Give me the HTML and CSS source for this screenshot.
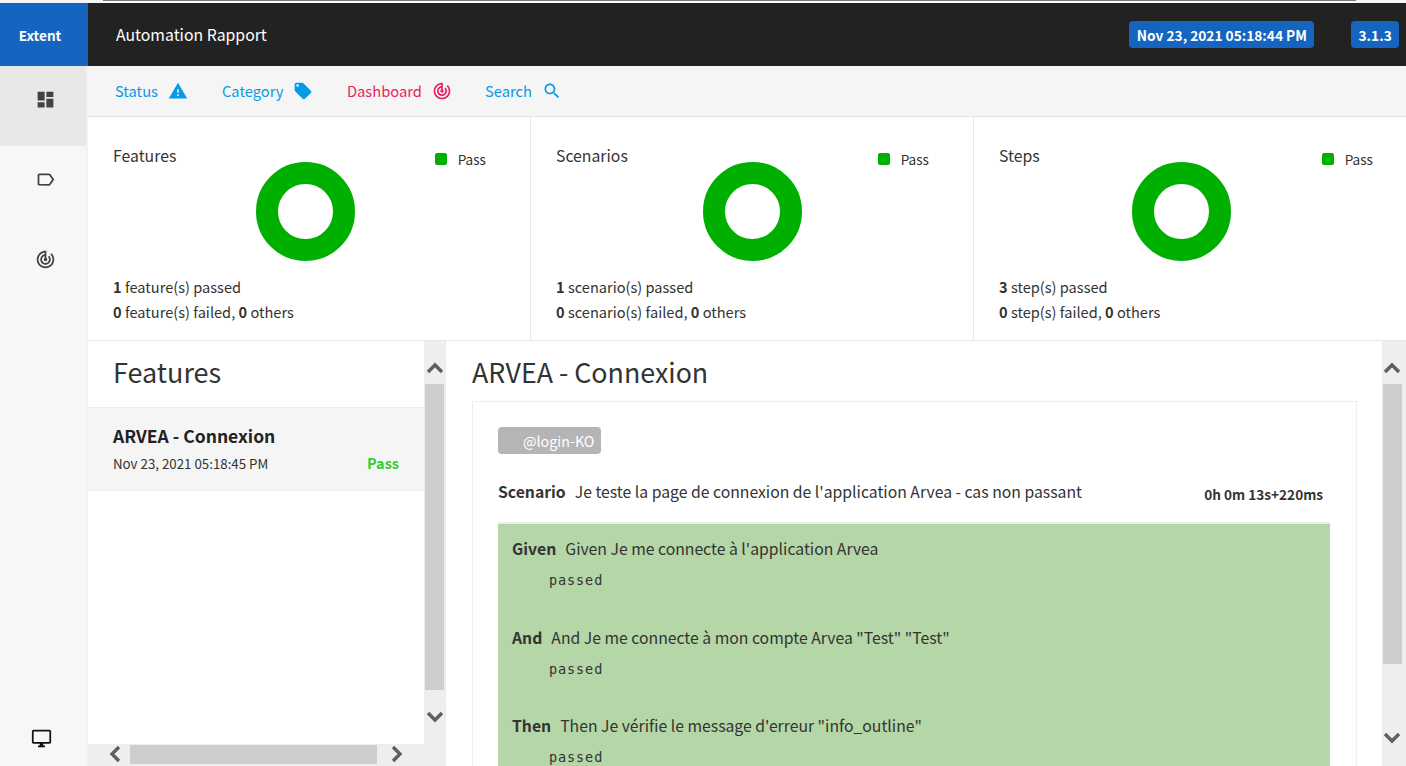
FILE: index.html
```html
<!DOCTYPE html>
<html lang="en">
<head>
    <meta charset="UTF-8">
    <title>Automation Rapport</title>
    <link rel="stylesheet" href="styles.css">
</head>
<body>
    <div class="topline"></div>
    <header class="header">
        <div class="logo">Extent</div>
        <div class="report-name">Automation Rapport</div>
        <span class="badge badge-date">Nov 23, 2021 05:18:44 PM</span>
        <span class="badge badge-version">3.1.3</span>
    </header>

    <div class="main">
        <nav class="sidebar">
            <a class="side-item active">
                <svg viewBox="0 0 24 24"><path d="M3 13h8V3H3v10zm0 8h8v-6H3v6zm10 0h8V11h-8v10zm0-18v6h8V3h-8z"/></svg>
            </a>
            <a class="side-item">
                <svg viewBox="0 0 24 24"><path d="M17.63 5.84C17.27 5.33 16.67 5 16 5L5 5.01C3.9 5.01 3 5.9 3 7v10c0 1.1.9 1.99 2 1.99L16 19c.67 0 1.27-.33 1.63-.84L22 12l-4.37-6.16zM16 17H5V7h11l3.55 5L16 17z"/></svg>
            </a>
            <a class="side-item">
                <svg viewBox="0 0 24 24"><path d="M19.07 4.93l-1.41 1.41C19.1 7.79 20 9.79 20 12c0 4.42-3.58 8-8 8s-8-3.58-8-8c0-4.08 3.05-7.44 7-7.93v2.02C8.16 6.57 6 9.03 6 12c0 3.31 2.69 6 6 6s6-2.69 6-6c0-1.66-.67-3.16-1.76-4.24l-1.41 1.41C15.55 9.9 16 10.9 16 12c0 2.21-1.79 4-4 4s-4-1.79-4-4c0-1.86 1.28-3.41 3-3.86v2.14c-.6.35-1 .98-1 1.72 0 1.1.9 2 2 2s2-.9 2-2c0-.74-.4-1.38-1-1.72V2h-1C6.48 2 2 6.48 2 12s4.48 10 10 10 10-4.48 10-10c0-2.76-1.12-5.26-2.93-7.07z"/></svg>
            </a>
            <a class="side-item side-bottom">
                <svg viewBox="0 0 24 24"><path d="M21 2H3c-1.1 0-2 .9-2 2v12c0 1.1.9 2 2 2h7v2H8v2h8v-2h-2v-2h7c1.1 0 2-.9 2-2V4c0-1.1-.9-2-2-2zm0 14H3V4h18v12z"/></svg>
            </a>
        </nav>

        <div class="content">
            <div class="subnav">
                <a class="tab tab-status">Status
                    <svg viewBox="0 0 24 24"><path d="M1 21h22L12 2 1 21zm12-3h-2v-2h2v2zm0-4h-2v-4h2v4z"/></svg>
                </a>
                <a class="tab tab-category">Category
                    <svg viewBox="0 0 24 24"><path d="M21.41 11.58l-9-9C12.05 2.22 11.55 2 11 2H4c-1.1 0-2 .9-2 2v7c0 .55.22 1.05.59 1.42l9 9c.36.36.86.58 1.41.58.55 0 1.05-.22 1.41-.59l7-7c.37-.36.59-.86.59-1.41 0-.55-.23-1.06-.59-1.42zM5.5 7C4.67 7 4 6.33 4 5.5S4.67 4 5.5 4 7 4.67 7 5.5 6.33 7 5.5 7z"/></svg>
                </a>
                <a class="tab tab-dashboard">Dashboard
                    <svg viewBox="0 0 24 24"><path d="M19.07 4.93l-1.41 1.41C19.1 7.79 20 9.79 20 12c0 4.42-3.58 8-8 8s-8-3.58-8-8c0-4.08 3.05-7.44 7-7.93v2.02C8.16 6.57 6 9.03 6 12c0 3.31 2.69 6 6 6s6-2.69 6-6c0-1.66-.67-3.16-1.76-4.24l-1.41 1.41C15.55 9.9 16 10.9 16 12c0 2.21-1.79 4-4 4s-4-1.79-4-4c0-1.86 1.28-3.41 3-3.86v2.14c-.6.35-1 .98-1 1.72 0 1.1.9 2 2 2s2-.9 2-2c0-.74-.4-1.38-1-1.72V2h-1C6.48 2 2 6.48 2 12s4.48 10 10 10 10-4.48 10-10c0-2.76-1.12-5.26-2.93-7.07z"/></svg>
                </a>
                <a class="tab tab-search">Search
                    <svg viewBox="0 0 24 24"><path d="M15.5 14h-.79l-.28-.27C15.41 12.59 16 11.11 16 9.5 16 5.91 13.09 3 9.5 3S3 5.91 3 9.5 5.91 16 9.5 16c1.61 0 3.09-.59 4.23-1.57l.27.28v.79l5 4.99L20.49 19l-4.99-5zm-6 0C7.01 14 5 11.99 5 9.5S7.01 5 9.5 5 14 7.01 14 9.5 11.99 14 9.5 14z"/></svg>
                </a>
            </div>

            <div class="cards">
                <div class="card card-features">
                    <div class="chart-row">
                        <div class="card-title">Features</div>
                        <div class="donut"></div>
                        <div class="legend"><span class="legend-box"></span>Pass</div>
                    </div>
                    <div class="card-text"><b>1</b> feature(s) passed</div>
                    <div class="card-text"><b>0</b> feature(s) failed, <b>0</b> others</div>
                </div>
                <div class="card card-scenarios">
                    <div class="chart-row">
                        <div class="card-title">Scenarios</div>
                        <div class="donut"></div>
                        <div class="legend"><span class="legend-box"></span>Pass</div>
                    </div>
                    <div class="card-text"><b>1</b> scenario(s) passed</div>
                    <div class="card-text"><b>0</b> scenario(s) failed, <b>0</b> others</div>
                </div>
                <div class="card card-steps">
                    <div class="chart-row">
                        <div class="card-title">Steps</div>
                        <div class="donut"></div>
                        <div class="legend"><span class="legend-box"></span>Pass</div>
                    </div>
                    <div class="card-text"><b>3</b> step(s) passed</div>
                    <div class="card-text"><b>0</b> step(s) failed, <b>0</b> others</div>
                </div>
            </div>

            <div class="panels">
                <section class="list-panel">
                    <div class="list-body">
                        <div class="list-inner">
                            <h2 class="list-title">Features</h2>
                            <div class="test-item">
                                <div class="test-name">ARVEA - Connexion</div>
                                <div class="test-meta">
                                    <span class="test-time">Nov 23, 2021 05:18:45 PM</span>
                                    <span class="test-status">Pass</span>
                                </div>
                            </div>
                        </div>
                        <div class="vbar">
                            <svg class="arrow" viewBox="0 0 20 20"><path d="M3 14l7-7 7 7"/></svg>
                            <div class="vthumb vthumb-list"></div>
                            <svg class="arrow" viewBox="0 0 20 20"><path d="M3 6l7 7 7-7"/></svg>
                        </div>
                    </div>
                    <div class="hbar">
                        <svg class="arrow" viewBox="0 0 20 20"><path d="M14 3l-7 7 7 7"/></svg>
                        <div class="hthumb"></div>
                        <svg class="arrow" viewBox="0 0 20 20"><path d="M6 3l7 7-7 7"/></svg>
                    </div>
                </section>

                <section class="detail-panel">
                    <div class="detail-inner">
                        <h2 class="detail-title">ARVEA - Connexion</h2>
                        <div class="scenario-box">
                            <span class="tag">@login-KO</span>
                            <div class="scenario-head">
                                <span><b class="kw">Scenario</b>Je teste la page de connexion de l'application Arvea - cas non passant</span>
                                <span class="duration">0h 0m 13s+220ms</span>
                            </div>
                            <div class="steps">
                                <div class="step">
                                    <div><b class="kw">Given</b>Given Je me connecte à l'application Arvea</div>
                                    <div class="step-log">passed</div>
                                </div>
                                <div class="step">
                                    <div><b class="kw">And</b>And Je me connecte à mon compte Arvea "Test" "Test"</div>
                                    <div class="step-log">passed</div>
                                </div>
                                <div class="step">
                                    <div><b class="kw">Then</b>Then Je vérifie le message d'erreur "info_outline"</div>
                                    <div class="step-log">passed</div>
                                </div>
                            </div>
                        </div>
                    </div>
                    <div class="vbar vbar-detail">
                        <svg class="arrow" viewBox="0 0 20 20"><path d="M3 14l7-7 7 7"/></svg>
                        <div class="vthumb vthumb-detail"></div>
                        <svg class="arrow" viewBox="0 0 20 20"><path d="M3 6l7 7 7-7"/></svg>
                    </div>
                </section>
            </div>
        </div>
    </div>
</body>
</html>
```

FILE: styles.css
```css
* {
    box-sizing: border-box;
}

html, body {
    height: 100%;
}

body {
    margin: 0;
    height: 766px;
    overflow: hidden;
    background-color: #f5f5f5;
    color: #333;
    font-family: "Noto Sans CJK SC", "Noto Sans", sans-serif;
    font-size: 15px;
    display: flex;
    flex-direction: column;
}

.topline {
    height: 3px;
    background-color: #fff;
    border-top: 1px solid #777;
    margin: 0 50px 0 103px;
}

.header {
    height: 63px;
    flex: none;
    background-color: #222;
    color: #fff;
    display: flex;
    align-items: center;
    padding-right: 7px;
}

.logo {
    width: 88px;
    height: 100%;
    background-color: #1565c0;
    font-size: 13.5px;
    font-weight: 700;
    padding-right: 8px;
    display: flex;
    align-items: center;
    justify-content: center;
}

.report-name {
    margin-left: 28px;
    margin-right: auto;
    padding-bottom: 1px;
    font-size: 15.8px;
}

.badge {
    background-color: #1565c0;
    border-radius: 4px;
    font-size: 13.7px;
    font-weight: 700;
    height: 27px;
    padding: 0 7px;
    display: flex;
    align-items: center;
}

.badge-date {
    padding-left: 7.5px;
    padding-right: 7.5px;
}

.badge-version {
    margin-left: 37px;
    letter-spacing: .1px;
}

.main {
    flex: 1;
    display: flex;
    min-height: 0;
}

.sidebar {
    width: 88px;
    flex: none;
    background-color: #f7f7f7;
    border-right: 2px solid #f2f2f2;
    display: flex;
    flex-direction: column;
}

.side-item {
    height: 80px;
    display: flex;
    justify-content: center;
    align-items: center;
    padding-bottom: 13px;
    padding-left: 4px;
}

.side-item svg {
    width: 21px;
    height: 21px;
    fill: #424242;
}

.side-item.active {
    background-color: #e8e8e8;
}

.side-bottom {
    margin-top: auto;
    height: 56px;
    padding: 0 4px 0 0;
}

.side-bottom svg {
    fill: #111;
}

.content {
    flex: 1;
    min-width: 0;
    display: flex;
    flex-direction: column;
}

.subnav {
    height: 50px;
    flex: none;
    display: flex;
    align-items: center;
    padding: 0 0 1px 27px;
    font-size: 14.7px;
}

.tab {
    display: flex;
    align-items: center;
    gap: 10px;
    color: #039be5;
}

.tab svg {
    width: 20px;
    height: 20px;
    fill: currentColor;
}

.tab-status {
    width: 107px;
}

.tab-category {
    width: 125px;
}

.tab-dashboard {
    width: 138px;
    color: #e91e63;
}

.cards {
    height: 225px;
    flex: none;
    display: flex;
    border-top: 1px solid #e4e4e4;
    border-bottom: 1px solid #e8e8e8;
}

.card {
    width: 443px;
    background-color: #fff;
    border-right: 1px solid #e8e8e8;
    padding: 28px 25px 0;
}

.card-steps {
    flex: 1;
    border-right: none;
}

.chart-row {
    display: flex;
    align-items: flex-start;
    height: 129px;
}

.card-title {
    margin-top: 1px;
    font-size: 15.8px;
    line-height: 20px;
}

.card-features .card-title {
    width: 143px;
}

.card-scenarios .card-title {
    width: 147px;
}

.card-steps .card-title {
    width: 133px;
}

.donut {
    width: 99px;
    height: 99px;
    margin-top: 17px;
    border: 22px solid #00b000;
    border-radius: 50%;
}

.legend {
    margin-left: auto;
    margin-right: 19px;
    margin-top: 4px;
    font-size: 13.6px;
    line-height: 20px;
    display: flex;
    align-items: center;
}

.legend-box {
    width: 12px;
    height: 12px;
    margin-right: 11px;
    border-radius: 2px;
    background-color: #00b000;
}

.card-steps .legend {
    margin-right: 8px;
}

.card-text {
    font-size: 14.6px;
    line-height: 25px;
}

.panels {
    flex: 1;
    display: flex;
    min-height: 0;
}

.list-panel {
    width: 358px;
    flex: none;
    display: flex;
    flex-direction: column;
    border-right: 1px solid #e8e8e8;
}

.list-body {
    flex: 1;
    display: flex;
    min-height: 0;
}

.list-inner {
    flex: 1;
    background-color: #fff;
    min-width: 0;
}

.list-title {
    margin: 0;
    height: 67px;
    padding: 13px 0 0 25px;
    font-size: 27px;
    font-weight: 400;
    line-height: 36px;
    border-bottom: 1px solid #eee;
}

.test-item {
    height: 83px;
    padding: 15px 25px 0;
    background-color: #f5f5f5;
    border-bottom: 1px solid #eee;
}

.test-name {
    font-size: 17.5px;
    font-weight: 700;
    line-height: 26px;
    color: #222;
}

.test-meta {
    display: flex;
    justify-content: space-between;
    margin-top: 3px;
}

.test-time {
    font-size: 13.3px;
    line-height: 24px;
}

.test-status {
    color: #32cd32;
    font-size: 14.5px;
    font-weight: 700;
    line-height: 22px;
}

.vbar {
    width: 21px;
    flex: none;
    background-color: #eee;
    display: flex;
    flex-direction: column;
    justify-content: space-between;
    align-items: center;
}

.arrow {
    width: 20px;
    height: 20px;
    flex: none;
    fill: none;
    stroke: #606060;
    stroke-width: 3.4;
}

.vbar .arrow:first-child {
    margin-top: 17px;
    margin-bottom: 6px;
}

.vbar .arrow:last-child {
    margin-bottom: 17px;
}

.vthumb {
    width: 19px;
    margin-bottom: auto;
    background-color: #cdcdcd;
}

.vthumb-list {
    height: 306px;
}

.hbar {
    height: 22px;
    flex: none;
    background-color: #eee;
    display: flex;
    align-items: flex-start;
    padding: 1px 0 0 17px;
}

.hthumb {
    width: 247px;
    height: 19px;
    margin-left: 5px;
    background-color: #cdcdcd;
}

.hbar .arrow {
    margin-top: -1px;
}

.hbar .arrow:last-child {
    margin-left: 10px;
}

.detail-panel {
    flex: 1;
    min-width: 0;
    display: flex;
    background-color: #fff;
    overflow: hidden;
}

.detail-inner {
    flex: 1;
    min-width: 0;
    padding: 0 25px 0 26px;
}

.detail-title {
    margin: 0;
    padding-top: 13px;
    font-size: 26.8px;
    font-weight: 400;
    line-height: 36px;
    height: 60px;
}

.scenario-box {
    border: 1px solid #eee;
    height: 500px;
    padding: 25px 26px 0 25px;
}

.tag {
    display: block;
    height: 27px;
    width: 103px;
    padding-left: 25px;
    background-color: #b5b5b5;
    color: #fff;
    border-radius: 4px;
    font-size: 14.3px;
    line-height: 27px;
}

.scenario-head {
    display: flex;
    justify-content: space-between;
    align-items: center;
    margin-top: 14px;
    height: 54px;
    font-size: 15.75px;
    padding-bottom: 8px;
}

.kw {
    font-weight: 700;
    margin-right: 9px;
}

.duration {
    font-size: 13.6px;
    font-weight: 700;
    padding-right: 7px;
    padding-top: 6px;
}

.steps {
    background-color: #b5d6a7;
    border-top: 2px solid #eee;
    padding: 12px 14px;
    font-size: 15.75px;
}

.step {
    height: 88.5px;
    line-height: 26px;
}

.step-log {
    margin-top: 10px;
    padding-left: 37px;
    font-family: "DejaVu Sans Mono", monospace;
    font-size: 13.5px;
    letter-spacing: .9px;
    line-height: 16px;
}

.vbar-detail {
    width: 24px;
    align-items: flex-start;
}

.vbar-detail .arrow:last-child {
    margin-bottom: 18px;
}

.vthumb-detail {
    height: 280px;
    margin-left: 1px;
}
```
